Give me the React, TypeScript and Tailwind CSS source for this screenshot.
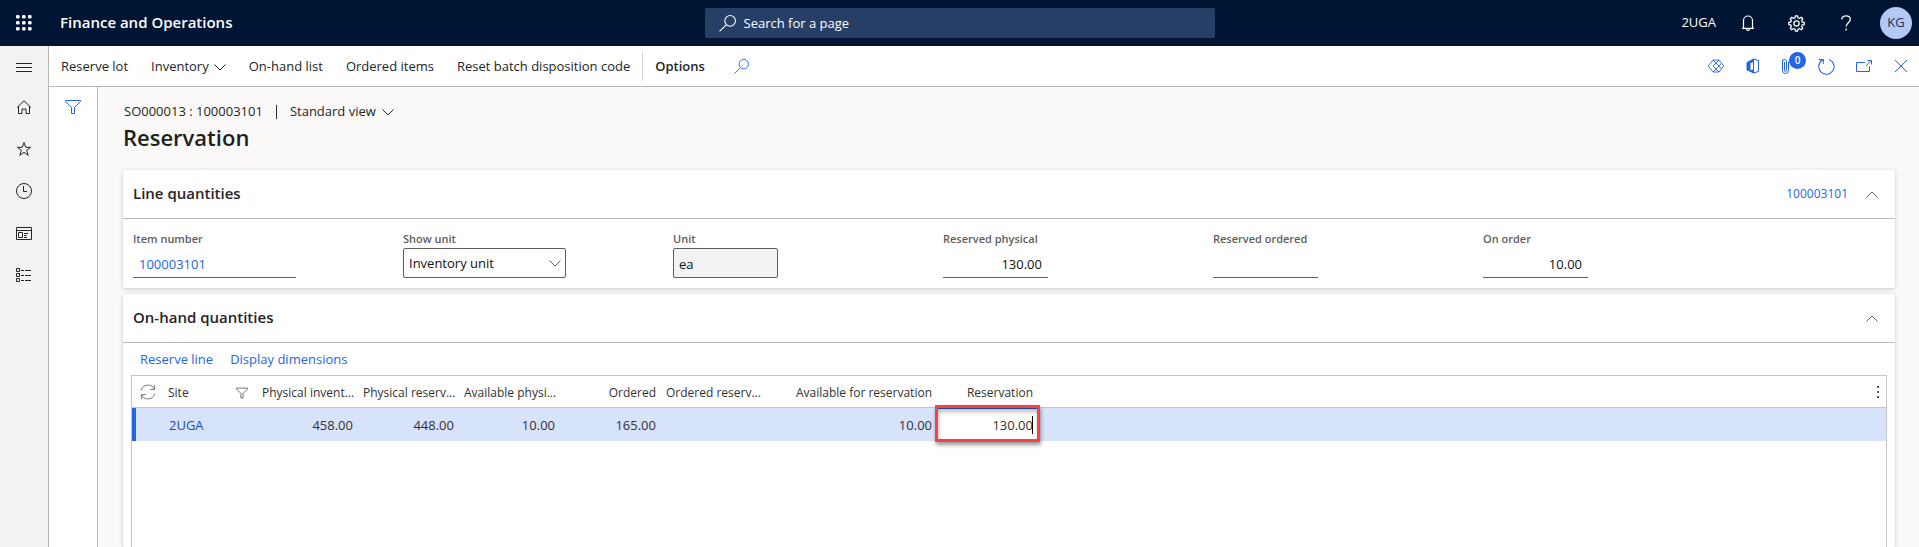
import React from "react";

type IconProps = { className?: string; children: React.ReactNode; size?: number; sw?: number };

function Icon({ className = "", children, size = 16, sw = 1 }: IconProps) {
  return (
    <svg
      className={"shrink-0 " + className}
      width={size}
      height={size}
      viewBox="0 0 16 16"
      fill="none"
      stroke="currentColor"
      strokeWidth={sw}
      aria-hidden="true"
    >
      {children}
    </svg>
  );
}

function ChevronDown({ className = "" }: { className?: string }) {
  return (
    <svg className={"shrink-0 " + className} width="12" height="7" viewBox="0 0 12 7" fill="none" stroke="currentColor" aria-hidden="true">
      <path d="M.5.5 6 6 11.5.5" />
    </svg>
  );
}

function ChevronUp() {
  return (
    <svg width="12" height="7" viewBox="0 0 12 7" fill="none" stroke="currentColor" aria-hidden="true">
      <path d="M.5 6.5 6 1l5.500 5.500" />
    </svg>
  );
}

function Funnel({ size }: { size: number }) {
  return (
    <Icon size={size}>
      <path d="M.5 1.500h15v1L9.500 8.500v6h-3v-6L.5 2.500z" />
    </Icon>
  );
}

function Magnifier({ size }: { size: number }) {
  return (
    <Icon size={size}>
      <circle cx="10.500" cy="5.500" r="5" />
      <path d="M6.800 9.200.5 15.500" />
    </Icon>
  );
}

function RailItem({ label, children }: { label: string; children: React.ReactNode }) {
  return (
    <button type="button" aria-label={label} className="flex h-[42px] w-full items-center justify-center">
      {children}
    </button>
  );
}

function ToolIcon({ label, children }: { label: string; children: React.ReactNode }) {
  return (
    <button type="button" aria-label={label} className="relative flex h-10 w-[37px] items-center justify-center">
      {children}
    </button>
  );
}

function TopBar() {
  return (
    <header className="grid h-[46px] shrink-0 grid-cols-[1fr_510px_1fr] items-center bg-[#001433] text-white">
      <div className="flex items-center">
        <button type="button" aria-label="App launcher" className="flex h-[46px] w-12 items-center justify-center">
          <svg width="16" height="16" viewBox="0 0 16 16" fill="currentColor" aria-hidden="true">
            {[2, 8, 14].map((y) => [2, 8, 14].map((x) => <rect key={x + "-" + y} x={x - 2} y={y - 2} width="3.600" height="3.600" rx="1.300" />))}
          </svg>
        </button>
        <a href="#" className="ml-3 pb-[2px] text-[15px] font-semibold">Finance and Operations</a>
      </div>
      <label className="flex h-[30px] items-center gap-2 rounded-[2px] bg-[#273e66] pl-[14px]">
        <Magnifier size={17} />
        <input
          type="search"
          aria-label="Search for a page"
          placeholder="Search for a page"
          className="h-full min-w-0 flex-1 bg-transparent text-[13px] outline-none placeholder:text-white"
        />
      </label>
      <div className="flex items-center justify-end pr-[7px]">
        <button type="button" className="mr-[7px] text-[13px]">2UGA</button>
        <button type="button" aria-label="Notifications" className="flex w-[49px] justify-center">
          <Icon sw={1.200}>
            <path d="M2 13.400h12M3.500 13.400V5.500a4.500 4.500 0 0 1 9 0v7.900M6.500 13.900a1.500 1.500 0 0 0 3 0" />
          </Icon>
        </button>
        <button type="button" aria-label="Settings" className="flex w-[49px] justify-center">
          <svg width="17" height="17" viewBox="0 0 17 17" fill="none" stroke="currentColor" strokeWidth="1.300" strokeLinejoin="round" aria-hidden="true">
            {[0, 45, 90, 135, 180, 225, 270, 315].map((a) => (
              <path key={a} d="M6.300 3.200 7 2.900 7.400.8h2.200L10 2.900l.7.300" transform={"rotate(" + a + " 8.500 8.500)"} />
            ))}
            <circle cx="8.500" cy="8.500" r="2.600" />
          </svg>
        </button>
        <button type="button" aria-label="Help" className="flex w-[49px] justify-center">
          <Icon sw={1.300}>
            <path d="M3.800 4.500C3.800 2 5.500.9 8 .9s4.300 1.300 4.300 3.500c0 3-4.200 3.600-4.200 7M8.100 13.500v2" />
          </Icon>
        </button>
        <button type="button" className="ml-[10px] size-8 rounded-full bg-[#b4c8f6] text-[13px] text-[#20304f]">KG</button>
      </div>
    </header>
  );
}

function Rail() {
  return (
    <nav className="w-[49px] shrink-0 border-r border-[#b9b7b5] bg-[#f3f2f1] text-[#252423]">
      <button type="button" aria-label="Expand navigation" className="flex h-10 w-full items-center justify-center">
        <Icon><path d="M0 5.500h16M0 9.500h16M0 13.500h16" /></Icon>
      </button>
      <RailItem label="Home">
        <Icon><path d="M1 8.500 8 1.800l7 6.700M2.500 7.500v7h3.500v-4.500h4v4.500h3.500v-7" /></Icon>
      </RailItem>
      <RailItem label="Favorites">
        <Icon><path d="m8 1.500 1.700 4.800h5l-4 3 1.500 5L8 11.300l-4.200 3 1.500-5-4-3h5z" /></Icon>
      </RailItem>
      <RailItem label="Recent">
        <Icon><circle cx="8" cy="8" r="7.500" /><path d="M7.500 3v5.500H11" /></Icon>
      </RailItem>
      <RailItem label="Workspaces">
        <Icon><path d="M.5 2.500h15v12H.5zM.5 5.500h15M2.500 7.500h4v5h-4zM8 8.500h4M8 10.500h2.500M8 12.500h3" /></Icon>
      </RailItem>
      <RailItem label="Modules">
        <Icon><path d="M.5 1.500h3v3h-3zM.5 6.500h3v3h-3zM.5 11.500h3v3h-3zM5 3.500h3M9 3.500h6M5 8.500h3M9 8.500h6M5 13.500h3M9 13.500h6" /></Icon>
      </RailItem>
    </nav>
  );
}

function ActionBar() {
  return (
    <div className="flex h-[41px] shrink-0 items-center justify-between border-b border-[#b9b7b5] bg-white pl-3">
      <div className="flex items-center gap-[23px] text-[13px] text-[#252423]">
        <button type="button" className="pt-[2px]">Reserve lot</button>
        <button type="button" className="flex items-center gap-[5px] pt-[2px]">Inventory<ChevronDown /></button>
        <button type="button" className="pt-[2px]">On-hand list</button>
        <button type="button" className="pt-[2px]">Ordered items</button>
        <div className="flex items-center gap-3">
          <button type="button" className="pt-[2px]">Reset batch disposition code</button>
          <span className="h-[30px] w-px bg-[#d6d4d2]" />
          <button type="button" className="pt-[2px] font-semibold">Options</button>
        </div>
        <button type="button" aria-label="Search actions" className="ml-[6px] text-[#2266e3]"><Magnifier size={15} /></button>
      </div>
      <div className="flex text-[#2266e3]">
        <ToolIcon label="Power Apps">
          <Icon><path d="M5 2h6l4.700 6L11 14H5L.3 8zM5 2l8.500 8.700M5 14l8.500-8.700M11 2 5 8l6 6" strokeWidth=".9" /></Icon>
        </ToolIcon>
        <ToolIcon label="Open in Microsoft Office">
          <Icon><path d="M2 4.500 8.500 1v2.500L5 4.800v6.700L3.500 12.500 2 12zM3.500 12.500l5-.5v3z" fill="currentColor" /><path d="M8.500 1 13.500 2.500v11L8.500 15z" /></Icon>
        </ToolIcon>
        <ToolIcon label="Attachments, 0">
          <Icon className="mr-2"><path d="M4.500 2v10.500a3 3 0 0 0 6 0V3.500M6.500 4v8.500a1 1 0 0 0 2 0V3.500a2 2 0 0 0-4 0" /></Icon>
          <span className="absolute top-[6px] right-[2px] flex size-[17px] items-center justify-center rounded-full bg-[#2266e3] text-[10px] font-semibold text-white">0</span>
        </ToolIcon>
        <ToolIcon label="Refresh">
          <Icon size={17}><path d="M10.500 1.400A7.200 7.200 0 1 1 4 2.100M.8 1.500H5v4" /></Icon>
        </ToolIcon>
        <ToolIcon label="Open in new window">
          <Icon><path d="M9 4.500H.5v9h13V8.500M10 8l5-5.500M11.500 2.500h4v4" /></Icon>
        </ToolIcon>
        <ToolIcon label="Close">
          <Icon><path d="m2 2 12 12M14 2 2 14" /></Icon>
        </ToolIcon>
      </div>
    </div>
  );
}

function Card({ title, extra, grow, children }: { title: string; extra?: React.ReactNode; grow?: boolean; children: React.ReactNode }) {
  return (
    <section className={(grow ? "flex flex-1 flex-col " : "") + "rounded-t-[3px] rounded-b-[2px] bg-white shadow-[0_1px_4px_rgba(0,0,0,0.2)]"}>
      <div className="flex h-[49px] items-center justify-between border-b border-[#b9b7b5] pr-[17px] pl-[10px]">
        <h2 className="pb-[2px] text-[15px] font-semibold text-[#252423]">{title}</h2>
        <div className="flex items-center gap-[18px]">
          {extra}
          <button type="button" aria-label={"Collapse " + title} className="text-[#605e5c]"><ChevronUp /></button>
        </div>
      </div>
      {children}
    </section>
  );
}

function Field({ id, label, children }: { id: string; label: string; children: React.ReactNode }) {
  return (
    <div className="flex w-[270px] flex-col">
      <label htmlFor={id} className="h-[18px] text-[11px] leading-[18px] font-semibold text-[#605e5c]">{label}</label>
      {children}
    </div>
  );
}

const underline = "h-[30px] border-b border-[#605e5c] bg-transparent px-[6px] pt-[2px] text-[13px] text-[#111] outline-none";

function LineQuantities() {
  return (
    <Card title="Line quantities" extra={<a href="#" className="text-[12px] text-[#2266e3]">100003101</a>}>
      <div className="flex flex-wrap pt-[11px] pr-[10px] pb-[10px] pl-[10px]">
        <Field id="item" label="Item number">
          <input id="item" readOnly value="100003101" className="h-[30px] w-[163px] border-b border-[#605e5c] px-[6px] pt-[2px] text-[13px] text-[#2266e3] outline-none" />
        </Field>
        <Field id="show" label="Show unit">
          <div className="relative w-[163px]">
            <select id="show" className="h-[30px] w-full appearance-none rounded-[2px] border border-[#605e5c] bg-white px-[5px] pt-[2px] text-[13px] text-[#111]">
              <option>Inventory unit</option>
            </select>
            <ChevronDown className="pointer-events-none absolute top-3 right-[5px] text-[#605e5c]" />
          </div>
        </Field>
        <Field id="unit" label="Unit">
          <input id="unit" readOnly value="ea" className="h-[30px] w-[105px] rounded-[2px] border border-[#605e5c] bg-[#f3f2f1] px-[5px] pt-[2px] text-[13px] text-[#111] outline-none" />
        </Field>
        <Field id="rp" label="Reserved physical">
          <input id="rp" readOnly value="130.00" className={underline + " w-[105px] text-right"} />
        </Field>
        <Field id="ro" label="Reserved ordered">
          <input id="ro" readOnly value="" className={underline + " w-[105px] text-right"} />
        </Field>
        <Field id="oo" label="On order">
          <input id="oo" readOnly value="10.00" className={underline + " w-[105px] text-right"} />
        </Field>
      </div>
    </Card>
  );
}

const th = "whitespace-nowrap px-[5px] pt-[2px] text-[12px] font-normal";
const td = "px-[5px] pt-[2px] text-right text-[13px]";

function OnHand() {
  return (
    <Card title="On-hand quantities" grow>
      <div className="flex h-8 items-center gap-[17px] pt-[2px] pl-[17px] text-[13px] text-[#2266e3]">
        <button type="button">Reserve line</button>
        <button type="button">Display dimensions</button>
      </div>
      <div className="mr-2 ml-2 flex-1 border-x border-t border-[#c8c6c4]">
        <table className="w-full table-fixed border-separate border-spacing-0 text-[#323130]">
          <colgroup>
            <col className="w-[31px]" />
            <col className="w-[94px]" />
            <col className="w-[101px]" />
            <col className="w-[101px]" />
            <col className="w-[101px]" />
            <col className="w-[101px]" />
            <col className="w-[101px]" />
            <col className="w-[175px]" />
            <col className="w-[101px]" />
            <col />
          </colgroup>
          <thead>
            <tr className="h-8 *:border-b *:border-[#c8c6c4]">
              <th className="pl-[8px] font-normal">
                <button type="button" aria-label="Refresh grid" className="flex text-[#605e5c]">
                  <Icon><path d="M1.200 6.500A7 7 0 0 1 14.300 5M14.800 9.500A7 7 0 0 1 1.700 11M14.500 1v4.500H10M1.500 15v-4.500H6" strokeWidth=".8" /></Icon>
                </button>
              </th>
              <th className="px-[5px] pt-[2px] text-left text-[12px] font-normal">
                <div className="flex items-center justify-between pr-[4px]">
                  Site
                  <button type="button" aria-label="Filter site" className="text-[#484644]"><Funnel size={12} /></button>
                </div>
              </th>
              <th className={th + " text-left"}>Physical invent...</th>
              <th className={th + " text-left"}>Physical reserv...</th>
              <th className={th + " text-left"}>Available physi...</th>
              <th className={th + " text-right"}>Ordered</th>
              <th className={th + " text-left"}>Ordered reserv...</th>
              <th className={th + " text-right"}>Available for reservation</th>
              <th className={th + " text-right"}>Reservation</th>
              <th className="pr-[6px]">
                <button type="button" aria-label="Grid options" className="ml-auto flex text-[#605e5c]">
                  <svg width="4" height="12" viewBox="0 0 4 12" fill="currentColor" aria-hidden="true">
                    <path d="M1 0h2v2H1zM1 5h2v2H1zM1 10h2v2H1z" />
                  </svg>
                </button>
              </th>
            </tr>
          </thead>
          <tbody>
            <tr className="h-[33px] bg-[#d7e3fb]">
              <td className="p-0"><div className="h-[33px] w-1 bg-[#2266e3]" /></td>
              <td className="px-[6px] pt-[2px] text-[13px]"><a href="#" className="text-[#1b4fb0]">2UGA</a></td>
              <td className={td}>458.00</td>
              <td className={td}>448.00</td>
              <td className={td}>10.00</td>
              <td className={td}>165.00</td>
              <td className={td} />
              <td className={td}>10.00</td>
              <td className="relative p-0">
                <input aria-label="Reservation" defaultValue="130.00" className="block h-[33px] w-full border-t border-[#2458c8] bg-white px-[5px] pb-px text-right text-[13px] outline-none" />
                <span className="absolute top-2 right-[5px] h-[18px] w-px bg-black" />
                <span className="pointer-events-none absolute -inset-x-[2px] -top-[3px] -bottom-px border-[3px] border-[#fb4041] shadow-[1px_3px_4px_rgba(0,0,0,0.4),inset_1px_4px_4px_rgba(0,0,0,0.25)]" />
              </td>
              <td />
            </tr>
          </tbody>
        </table>
      </div>
    </Card>
  );
}

export default function App() {
  return (
    <div className="flex min-h-screen flex-col bg-[#faf9f8] font-['Open_Sans','Noto_Sans',sans-serif]">
      <TopBar />
      <div className="flex flex-1">
        <Rail />
        <div className="flex min-w-0 flex-1 flex-col">
          <ActionBar />
          <div className="flex flex-1">
            <aside className="flex w-[49px] shrink-0 justify-center border-r border-[#b9b7b5] bg-white pt-3">
              <button type="button" aria-label="Show filters" className="h-4 text-[#2266e3]"><Funnel size={16} /></button>
            </aside>
            <main className="flex min-w-0 flex-1 flex-col pt-[15px] pr-6 pl-[25px]">
              <div className="flex h-5 items-center gap-[13px] pl-px text-[13px] text-[#252423]">
                <span>SO000013 : 100003101</span>
                <span className="h-[14px] w-px bg-[#323130]" />
                <button type="button" className="flex items-center gap-[6px]">Standard view<ChevronDown /></button>
              </div>
              <h1 className="mb-[17px] h-[31px] text-[22px] leading-[30px] font-semibold text-[#201f1e]">Reservation</h1>
              <div className="flex flex-1 flex-col gap-[6px]">
                <LineQuantities />
                <OnHand />
              </div>
            </main>
          </div>
        </div>
      </div>
    </div>
  );
}
